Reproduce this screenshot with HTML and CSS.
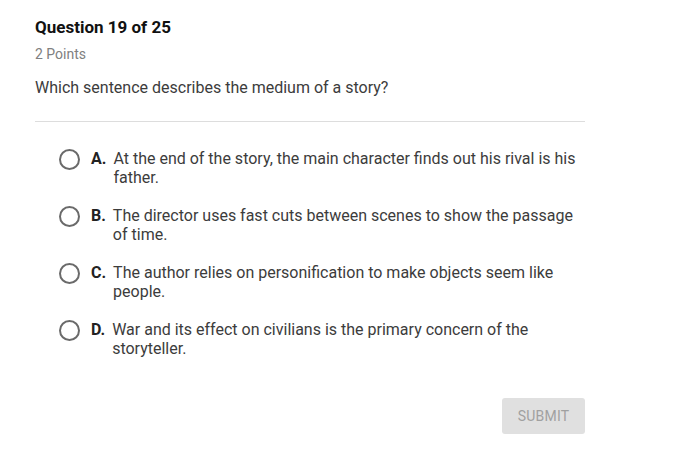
FILE: index.html
```html
<!DOCTYPE html>
<html>
<head>
<meta charset="utf-8">
<link rel="stylesheet" href="styles.css">
</head>
<body>
<div class="quiz">
  <h1 class="title">Question 19 of 25</h1>
  <div class="points">2 Points</div>
  <p class="prompt">Which sentence describes the medium of a story?</p>
  <hr class="divider">
  <ul class="options">
    <li class="option"><span class="radio"></span><span class="letter">A.</span><span class="text">At the end of the story, the main character finds out his rival is his father.</span></li>
    <li class="option"><span class="radio"></span><span class="letter">B.</span><span class="text">The director uses fast cuts between scenes to show the passage of time.</span></li>
    <li class="option"><span class="radio"></span><span class="letter">C.</span><span class="text">The author relies on personification to make objects seem like people.</span></li>
    <li class="option"><span class="radio"></span><span class="letter">D.</span><span class="text">War and its effect on civilians is the primary concern of the storyteller.</span></li>
  </ul>
  <div class="actions"><button class="submit">SUBMIT</button></div>
</div>
</body>
</html>
```
FILE: styles.css
```css
html, body {
  margin: 0;
  padding: 0;
  background: #ffffff;
  font-family: Roboto, "Liberation Sans", Arial, sans-serif;
  color: #333333;
}
.quiz {
  width: 550px;
  padding: 17px 0 0 35px;
}
.title {
  margin: 0;
  font-size: 17px;
  line-height: 20px;
  font-weight: 700;
  color: #111111;
}
.points {
  margin-top: 9px;
  font-size: 14px;
  line-height: 16px;
  color: #808080;
}
.prompt {
  margin: 16px 0 0 0;
  font-size: 16px;
  line-height: 19px;
  color: #3c3c3c;
}
.divider {
  margin: 24px 0 0 0;
  border: 0;
  border-top: 1px solid #dddddd;
  height: 0;
}
.options {
  list-style: none;
  margin: 27px 0 0 0;
  padding: 0 0 0 24px;
}
.option {
  display: flex;
  align-items: flex-start;
  font-size: 16px;
  line-height: 19px;
  margin-bottom: 19px;
}
.radio {
  flex: none;
  width: 17px;
  height: 17px;
  border: 2px solid #6a6a6a;
  border-radius: 50%;
  margin-top: 0px;
  margin-right: 11px;
}
.letter {
  flex: none;
  margin-right: 7px;
  font-weight: 700;
  color: #222222;
}
.text {
  flex: none;
  width: 470px;
  color: #3c3c3c;
}
.actions {
  display: flex;
  justify-content: flex-end;
  margin-top: 40px;
}
.submit {
  width: 83px;
  height: 36px;
  border: 0;
  border-radius: 3px;
  background: #e0e0e0;
  color: #a0a0a0;
  font-family: Roboto, "Liberation Sans", Arial, sans-serif;
  font-size: 14px;
  letter-spacing: 0.2px;
}
```
